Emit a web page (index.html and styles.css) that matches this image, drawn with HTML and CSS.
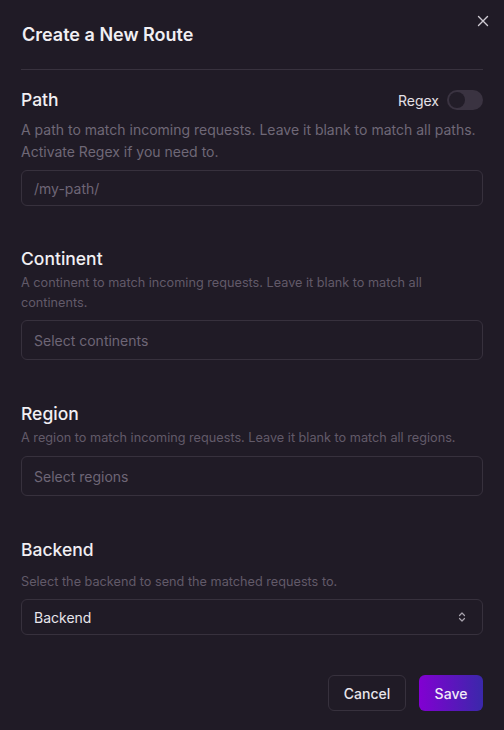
FILE: index.html
```html
<!DOCTYPE html>
<html lang="en">
<head>
<meta charset="utf-8">
<title>Create a New Route</title>
<link rel="stylesheet" href="styles.css">
</head>
<body>
<div class="dialog">
  <button class="close" aria-label="Close">
    <svg width="12" height="12" viewBox="0 0 12 12"><path d="M1.5 1.5L10.5 10.5M10.5 1.5L1.5 10.5" stroke="#cfcbd3" stroke-width="1.4" stroke-linecap="round"/></svg>
  </button>
  <h2 class="title">Create a New Route</h2>
  <div class="divider"></div>

  <section class="field field-path">
    <div class="label-row">
      <span class="label">Path</span>
      <span class="regex">Regex <span class="toggle"><span class="knob"></span></span></span>
    </div>
    <p class="desc desc-path">A path to match incoming requests. Leave it blank to match all paths. Activate Regex if you need to.</p>
    <div class="input input-path">/my-path/</div>
  </section>

  <section class="field field-continent">
    <div class="label">Continent</div>
    <p class="desc">A continent to match incoming requests. Leave it blank to match all continents.</p>
    <div class="input input-tall">Select continents</div>
  </section>

  <section class="field field-region">
    <div class="label">Region</div>
    <p class="desc">A region to match incoming requests. Leave it blank to match all regions.</p>
    <div class="input input-tall input-region">Select regions</div>
  </section>

  <section class="field field-backend">
    <div class="label">Backend</div>
    <p class="desc desc-backend">Select the backend to send the matched requests to.</p>
    <div class="input select">
      <span>Backend</span>
      <svg width="8" height="12" viewBox="0 0 8 12"><path d="M1.5 4.5L4 2L6.5 4.5M1.5 7.5L4 10L6.5 7.5" fill="none" stroke="#a8a3ad" stroke-width="1.2" stroke-linecap="round" stroke-linejoin="round"/></svg>
    </div>
  </section>

  <div class="actions">
    <button class="btn btn-cancel">Cancel</button>
    <button class="btn btn-save">Save</button>
  </div>
</div>
</body>
</html>
```

FILE: styles.css
```css
* { box-sizing: border-box; }
html, body {
  margin: 0;
  padding: 0;
  background: #201b26;
  height: 100%;
}
body {
  font-family: Inter, "Noto Sans", sans-serif;
  color: #eeecf0;
}
.dialog {
  position: relative;
  padding: 21px 21px 0 21px;
}
.close {
  position: absolute;
  top: 15px;
  right: 15px;
  width: 12px;
  height: 12px;
  padding: 0;
  border: 0;
  background: none;
  display: flex;
}
.title {
  margin: 0;
  padding-left: 1px;
  font-size: 18px;
  line-height: 28px;
  font-weight: 600;
  color: #f1eff3;
}
.divider {
  margin-top: 20px;
  height: 1px;
  background: #38323e;
}
.field { display: flex; flex-direction: column; }
.label-row {
  display: flex;
  justify-content: space-between;
  align-items: center;
  height: 20px;
}
.field-path { margin-top: 20px; }
.label {
  font-size: 17.5px;
  line-height: 28px;
  font-weight: 500;
  color: #f1eff3;
}
.label-row .label { line-height: 20px; }
.regex {
  display: flex;
  align-items: center;
  gap: 8px;
  font-size: 14px;
  color: #e4e1e7;
}
.toggle {
  width: 36px;
  height: 20px;
  border-radius: 10px;
  background: #3a3341;
  display: flex;
  align-items: center;
  padding: 2px;
}
.knob {
  width: 16px;
  height: 16px;
  border-radius: 50%;
  background: #221d28;
}
.desc {
  margin: 0;
  font-size: 12.7px;
  line-height: 20px;
  color: #625a69;
}
.desc-path {
  margin-top: 9px;
  font-size: 14px;
  line-height: 22px;
  color: #6f6877;
}
.desc-backend { margin-top: 8px; }
.input {
  margin-top: 7px;
  height: 36px;
  border: 1px solid #37313d;
  border-radius: 6px;
  display: flex;
  align-items: center;
  padding: 0 12px;
  font-size: 14px;
  color: #6e6676;
}
.input-tall { height: 40px; }
.input-region { margin-top: 8px; }
.field-continent { margin-top: 39px; }
.field-region { margin-top: 40px; }
.field-backend { margin-top: 40px; }
.select {
  height: 36px;
  justify-content: space-between;
  color: #e8e5eb;
  padding-right: 16px;
}
.actions {
  margin-top: 40px;
  display: flex;
  justify-content: flex-end;
  gap: 13px;
}
.btn {
  height: 36px;
  border-radius: 6px;
  font-family: Inter, "Noto Sans", sans-serif;
  font-size: 14px;
  font-weight: 500;
  padding: 0;
}
.btn-cancel {
  width: 78px;
  background: transparent;
  border: 1px solid #37313d;
  color: #e8e5eb;
}
.btn-save {
  width: 64px;
  border: 0;
  background: linear-gradient(90deg, #8200d2 0%, #3a28aa 100%);
  color: #f1ecf7;
}
```
